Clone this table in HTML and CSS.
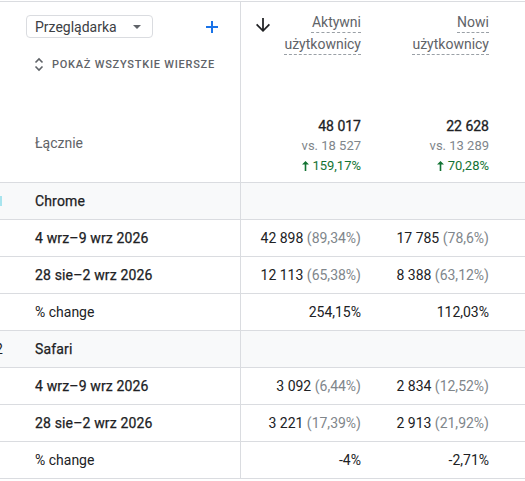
FILE: index.html
```html
<!DOCTYPE html>
<html lang="pl">
<head>
<meta charset="utf-8">
<link rel="stylesheet" href="styles.css">
</head>
<body>
<div class="table">
  <div class="row head">
    <div class="cell label-col head-left">
      <div class="dim-row">
        <div class="select">
          <span>Przeglądarka</span>
          <svg class="caret" width="8" height="4" viewBox="0 0 8 4"><path d="M0 0h8L4 4z" fill="#5f6368"/></svg>
        </div>
        <svg class="plus" width="12" height="12" viewBox="0 0 12 12"><path d="M6 0v12M0 6h12" stroke="#1a73e8" stroke-width="2"/></svg>
      </div>
      <div class="show-all">
        <svg width="10" height="15" viewBox="0 0 10 15"><path d="M1.5 5.5L5 2l3.5 3.5M1.5 9.5L5 13l3.5-3.5" fill="none" stroke="#5f6368" stroke-width="1.6"/></svg>
        <span>POKAŻ WSZYSTKIE WIERSZE</span>
      </div>
      <div class="total-label">Łącznie</div>
    </div>
    <div class="cell metric head-metric first">
      <div class="metric-title">
        <svg class="sort" width="14" height="14" viewBox="4 4 16 16"><path d="M20 12l-1.41-1.41L13 16.17V4h-2v12.17l-5.58-5.59L4 12l8 8 8-8z" fill="#202124"/></svg>
        <div class="title-text"><span class="dash">Aktywni</span><br><span class="dash">użytkownicy</span></div>
      </div>
      <div class="totals">
        <div class="total">48 017</div>
        <div class="vs">vs. 18 527</div>
        <div class="up"><svg width="7" height="10" viewBox="0 0 7 10"><path d="M3.5 0L0 3.6h2.7V10h1.6V3.6H7z" fill="#137333"/></svg> 159,17%</div>
      </div>
    </div>
    <div class="cell metric head-metric">
      <div class="metric-title">
        <div class="title-text"><span class="dash">Nowi</span><br><span class="dash">użytkownicy</span></div>
      </div>
      <div class="totals">
        <div class="total">22 628</div>
        <div class="vs">vs. 13 289</div>
        <div class="up"><svg width="7" height="10" viewBox="0 0 7 10"><path d="M3.5 0L0 3.6h2.7V10h1.6V3.6H7z" fill="#137333"/></svg> 70,28%</div>
      </div>
    </div>
    <div class="cell rest"></div>
  </div>

  <div class="row group">
    <div class="cell label-col"><span class="idx"><span class="swatch"></span></span><span class="strong">Chrome</span></div>
    <div class="cell metric"></div><div class="cell metric"></div><div class="cell rest"></div>
  </div>
  <div class="row">
    <div class="cell label-col"><span class="idx"></span><span class="strong">4 wrz–9 wrz 2026</span></div>
    <div class="cell metric">42 898&nbsp;<span class="pct">(89,34%)</span></div>
    <div class="cell metric">17 785&nbsp;<span class="pct">(78,6%)</span></div>
    <div class="cell rest"></div>
  </div>
  <div class="row">
    <div class="cell label-col"><span class="idx"></span><span class="strong">28 sie–2 wrz 2026</span></div>
    <div class="cell metric">12 113&nbsp;<span class="pct">(65,38%)</span></div>
    <div class="cell metric">8 388&nbsp;<span class="pct">(63,12%)</span></div>
    <div class="cell rest"></div>
  </div>
  <div class="row">
    <div class="cell label-col"><span class="idx"></span><span>% change</span></div>
    <div class="cell metric">254,15%</div>
    <div class="cell metric">112,03%</div>
    <div class="cell rest"></div>
  </div>

  <div class="row group">
    <div class="cell label-col"><span class="idx num">2</span><span class="strong">Safari</span></div>
    <div class="cell metric"></div><div class="cell metric"></div><div class="cell rest"></div>
  </div>
  <div class="row">
    <div class="cell label-col"><span class="idx"></span><span class="strong">4 wrz–9 wrz 2026</span></div>
    <div class="cell metric">3 092&nbsp;<span class="pct">(6,44%)</span></div>
    <div class="cell metric">2 834&nbsp;<span class="pct">(12,52%)</span></div>
    <div class="cell rest"></div>
  </div>
  <div class="row">
    <div class="cell label-col"><span class="idx"></span><span class="strong">28 sie–2 wrz 2026</span></div>
    <div class="cell metric">3 221&nbsp;<span class="pct">(17,39%)</span></div>
    <div class="cell metric">2 913&nbsp;<span class="pct">(21,92%)</span></div>
    <div class="cell rest"></div>
  </div>
  <div class="row">
    <div class="cell label-col"><span class="idx"></span><span>% change</span></div>
    <div class="cell metric">-4%</div>
    <div class="cell metric">-2,71%</div>
    <div class="cell rest"></div>
  </div>
</div>
</body>
</html>
```
FILE: styles.css
```css
html, body {
  margin: 0;
  padding: 0;
  background: #ffffff;
}
body {
  font-family: Roboto, "Liberation Sans", Arial, sans-serif;
  font-size: 14px;
  color: #202124;
  overflow: hidden;
}
.table {
  margin-top: 1px;
  border-top: 1px solid #dadce0;
  width: 525px;
}
.row {
  display: grid;
  grid-template-columns: 241px 136px 128px 1fr;
  height: 37px;
  border-bottom: 1px solid #dadce0;
  box-sizing: border-box;
}
.row.group {
  background: #f8f9fa;
}
.row.head {
  height: 181px;
}
.cell {
  display: flex;
  align-items: center;
  white-space: nowrap;
}
.label-col {
  border-right: 1px solid #dadce0;
}
.idx {
  flex: 0 0 40px;
  margin-left: -5px;
  display: flex;
  align-items: center;
}
.idx.num {
  color: #202124;
  font-size: 14px;
}
.swatch {
  width: 2px;
  height: 10px;
  margin-left: 5px;
  background: #a8e4ee;
}
.strong {
  font-weight: 400;
  -webkit-text-stroke: 0.25px currentColor;
  letter-spacing: 0.15px;
  color: #202124;
}
.metric {
  justify-content: flex-end;
  padding-right: 16px;
  box-sizing: border-box;
}
.pct {
  color: #80868b;
}

/* header */
.head-left {
  flex-direction: column;
  align-items: flex-start;
  padding-top: 13px;
}
.dim-row {
  display: flex;
  align-items: center;
  padding-left: 26px;
}
.select {
  display: flex;
  align-items: center;
  width: 127px;
  height: 23px;
  box-sizing: border-box;
  border: 1px solid #dadce0;
  border-radius: 4px;
  padding-left: 8px;
  color: #3c4043;
}
.caret {
  margin-left: 16px;
}
.plus {
  margin-left: 53px;
}
.show-all {
  display: flex;
  align-items: center;
  padding-left: 34px;
  margin-top: 19px;
  font-size: 11px;
  font-weight: 500;
  letter-spacing: 0.75px;
  color: #5f6368;
}
.show-all svg {
  margin-right: 8px;
}
.total-label {
  padding-left: 35px;
  margin-top: 63px;
  color: #5f6368;
}
.head-metric {
  flex-direction: column;
  align-items: stretch;
  justify-content: space-between;
  padding-top: 9px;
  padding-bottom: 6px;
}
.metric-title {
  display: flex;
  justify-content: space-between;
  align-items: flex-start;
}
.sort {
  margin-left: 15px;
  margin-top: 7px;
}
.title-text {
  margin-left: auto;
  text-align: right;
  line-height: 22px;
  color: #5f6368;
}
.dash {
  text-decoration: underline dashed #9aa0a6;
  text-decoration-thickness: 1px;
  text-underline-offset: 5px;
}
.totals {
  text-align: right;
  line-height: 20px;
}
.total {
  font-weight: 400;
  -webkit-text-stroke: 0.3px currentColor;
  color: #202124;
}
.vs {
  font-size: 13px;
  color: #80868b;
}
.up {
  font-size: 13px;
  color: #137333;
}
.up svg {
  vertical-align: -1px;
}
```
